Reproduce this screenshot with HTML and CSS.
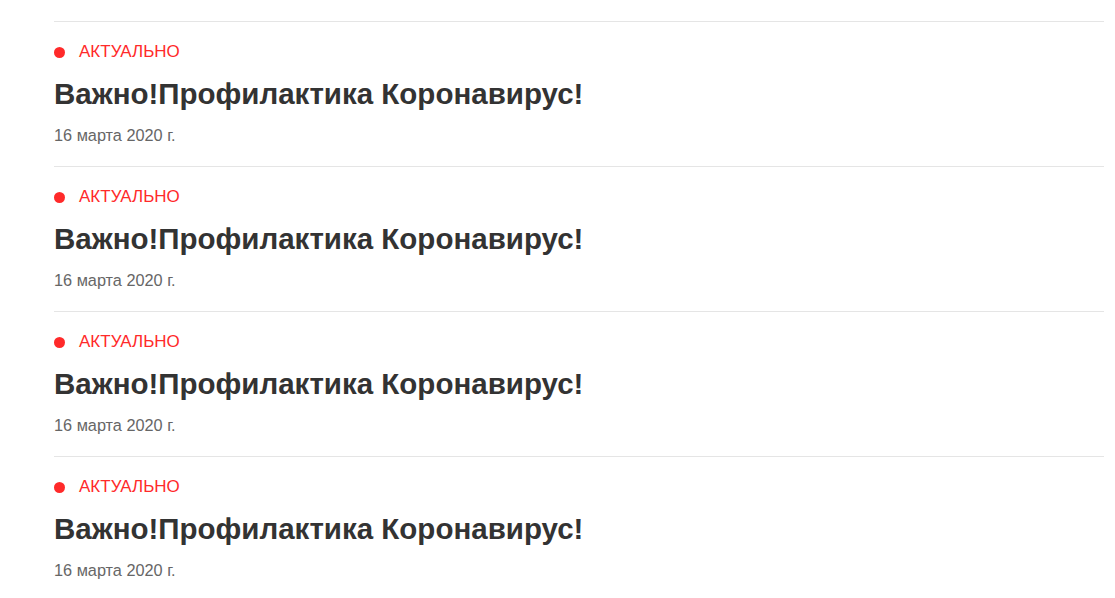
FILE: index.html
```html
<!DOCTYPE html>
<html lang="ru">
<head>
<meta charset="utf-8">
<link rel="stylesheet" href="styles.css">
</head>
<body>
<div class="list">
  <div class="item">
    <div class="tag"><span class="dot"></span>АКТУАЛЬНО</div>
    <div class="title">Важно!Профилактика Коронавирус!</div>
    <div class="date">16 марта 2020 г.</div>
  </div>
  <div class="item">
    <div class="tag"><span class="dot"></span>АКТУАЛЬНО</div>
    <div class="title">Важно!Профилактика Коронавирус!</div>
    <div class="date">16 марта 2020 г.</div>
  </div>
  <div class="item">
    <div class="tag"><span class="dot"></span>АКТУАЛЬНО</div>
    <div class="title">Важно!Профилактика Коронавирус!</div>
    <div class="date">16 марта 2020 г.</div>
  </div>
  <div class="item">
    <div class="tag"><span class="dot"></span>АКТУАЛЬНО</div>
    <div class="title">Важно!Профилактика Коронавирус!</div>
    <div class="date">16 марта 2020 г.</div>
  </div>
</div>
</body>
</html>
```
FILE: styles.css
```css
html, body {
  margin: 0;
  padding: 0;
  background: #fff;
  font-family: "Liberation Sans", Arial, sans-serif;
}
.list {
  margin-left: 54px;
  width: 1050px;
  padding-top: 21px;
}
.item {
  border-top: 1px solid #e5e5e5;
  height: 145px;
  padding-top: 20px;
  box-sizing: border-box;
}
.tag {
  display: flex;
  align-items: center;
  height: 20px;
  font-size: 17px;
  color: #ff2a2a;
}
.dot {
  width: 11px;
  height: 11px;
  border-radius: 50%;
  background: #ff2a2a;
  margin-right: 14px;
  flex: none;
}
.title {
  margin-top: 15px;
  font-size: 29.5px;
  line-height: 34px;
  font-weight: bold;
  color: #333;
}
.date {
  margin-top: 14px;
  font-size: 16.3px;
  line-height: 20px;
  color: #666;
}
```
